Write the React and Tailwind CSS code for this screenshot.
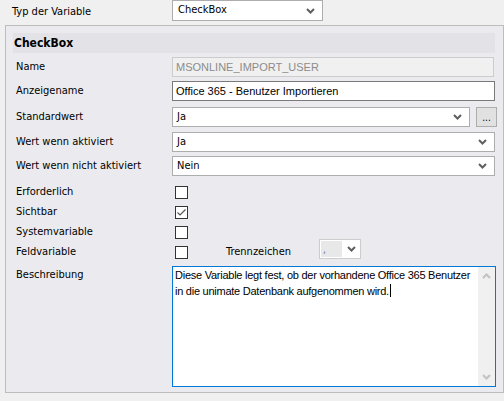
const ui = { fontFamily: '"DejaVu Sans Condensed", "DejaVu Sans", sans-serif' }

function Chevron({ color = '#5f5f5f' }) {
  return (
    <svg width="9" height="6" viewBox="0 0 9 6" className="shrink-0">
      <path d="M1 1 L4.5 4.5 L8 1" fill="none" stroke={color} strokeWidth="2" />
    </svg>
  )
}

function Combo({ value, className = '' }) {
  return (
    <div
      className={`flex h-[20px] items-center justify-between border border-[#adadad] bg-white pl-[4px] pr-[7px] text-[11px] text-black ${className}`}
    >
      <span>{value}</span>
      <Chevron />
    </div>
  )
}

function Row({ label, children, className = '' }) {
  return (
    <div className={`flex items-center ${className}`}>
      <div className="w-[166px] shrink-0 pl-[10px] text-[11px] text-black">{label}</div>
      {children}
    </div>
  )
}

function Box({ checked }) {
  return (
    <div className="ml-[3px] flex h-[13px] w-[13px] items-center justify-center border border-[#333333] bg-white">
      {checked && (
        <svg width="11" height="9" viewBox="0 0 11 9">
          <path d="M1.5 4.5 L4 7 L9.5 1.5" fill="none" stroke="#555555" strokeWidth="1.2" />
        </svg>
      )}
    </div>
  )
}

export default function App() {
  return (
    <div className="h-[401px] w-[504px] overflow-hidden bg-[#f0f0f0]" style={ui}>
      {/* top row */}
      <div className="flex h-[25px]">
        <div className="w-[172px] pl-[12px] pt-[4px] text-[11px] text-black">Typ der Variable</div>
        <Combo value="CheckBox" className="h-[21px] w-[151px] pl-[5px]" />
      </div>

      {/* panel */}
      <div className="ml-[5px] h-[368px] w-[499px] border border-[#bdbdbd] bg-[#ebebef]">
        <div className="ml-[7px] mt-[7px] flex h-[20px] w-[482px] items-center bg-[#e2e2e7] pl-[1px] text-[12px] font-bold text-black">
          CheckBox
        </div>

        <Row label="Name" className="mt-[4px]">
          <div
            className="flex h-[20px] w-[322px] items-center border border-[#cccccc] bg-[#f0f0f0] pl-[3px] text-[11px] text-[#8c8c8c]"
            style={{ fontFamily: '"Liberation Sans", Arial, sans-serif' }}
          >
            MSONLINE_IMPORT_USER
          </div>
        </Row>

        <Row label="Anzeigename" className="mt-[4px]">
          <div
            className="flex h-[20px] w-[323px] items-center border border-[#7a7a7a] bg-white pl-[3px] text-[11px] text-black"
            style={{ fontFamily: '"Liberation Sans", Arial, sans-serif' }}
          >
            Office 365 - Benutzer Importieren
          </div>
        </Row>

        <Row label="Standardwert" className="mt-[6px]">
          <Combo value="Ja" className="w-[298px]" />
          <div className="ml-[6px] flex h-[20px] w-[21px] items-end justify-center border border-[#adadad] bg-[#e1e1e1] pb-[3px] text-[10px] leading-none text-black">
            ...
          </div>
        </Row>

        <Row label="Wert wenn aktiviert" className="mt-[5px]">
          <Combo value="Ja" className="w-[323px]" />
        </Row>

        <Row label="Wert wenn nicht aktiviert" className="mt-[4px]">
          <Combo value="Nein" className="w-[323px]" />
        </Row>

        <Row label="Erforderlich" className="mt-[6px] h-[20px]">
          <Box />
        </Row>
        <Row label="Sichtbar" className="h-[20px]">
          <Box checked />
        </Row>
        <Row label="Systemvariable" className="h-[20px]">
          <Box />
        </Row>
        <Row label="Feldvariable" className="h-[20px]">
          <Box />
          <span className="ml-[38px] w-[93px] text-[11px] text-black">Trennzeichen</span>
          <div className="-mt-[6px] flex h-[20px] w-[42px] border border-[#cccccc] bg-white">
            <div className="m-[1px] flex w-[21px] items-end bg-[#e8e8e8] pb-[2px] pl-[2px] text-[10px] leading-none text-[#5a6a9a]">
              ,
            </div>
            <div className="flex flex-1 items-center justify-center">
              <Chevron />
            </div>
          </div>
        </Row>

        <div className="mt-[4px] flex">
          <div className="w-[166px] shrink-0 pl-[10px] pt-[1px] text-[11px] text-black">Beschreibung</div>
          <div className="flex h-[121px] w-[324px] border border-[#0078d7] bg-white">
            <div
              className="flex-1 pl-[2px] pt-[1px] text-[11px] leading-[14px] tracking-[-0.25px] text-black"
              style={{ fontFamily: '"Liberation Sans", Arial, sans-serif' }}
            >
              Diese Variable legt fest, ob der vorhandene Office 365 Benutzer in die unimate Datenbank aufgenommen wird.
              <span className="ml-[1px] inline-block h-[13px] w-px translate-y-[2px] bg-black" />
            </div>
            <div className="flex w-[17px] shrink-0 flex-col items-center justify-between bg-[#f0f0f0] py-[6px]">
              <svg width="9" height="6" viewBox="0 0 9 6">
                <path d="M1 5 L4.5 1.5 L8 5" fill="none" stroke="#c2c2c2" strokeWidth="2" />
              </svg>
              <Chevron color="#c2c2c2" />
            </div>
          </div>
        </div>
      </div>
    </div>
  )
}
